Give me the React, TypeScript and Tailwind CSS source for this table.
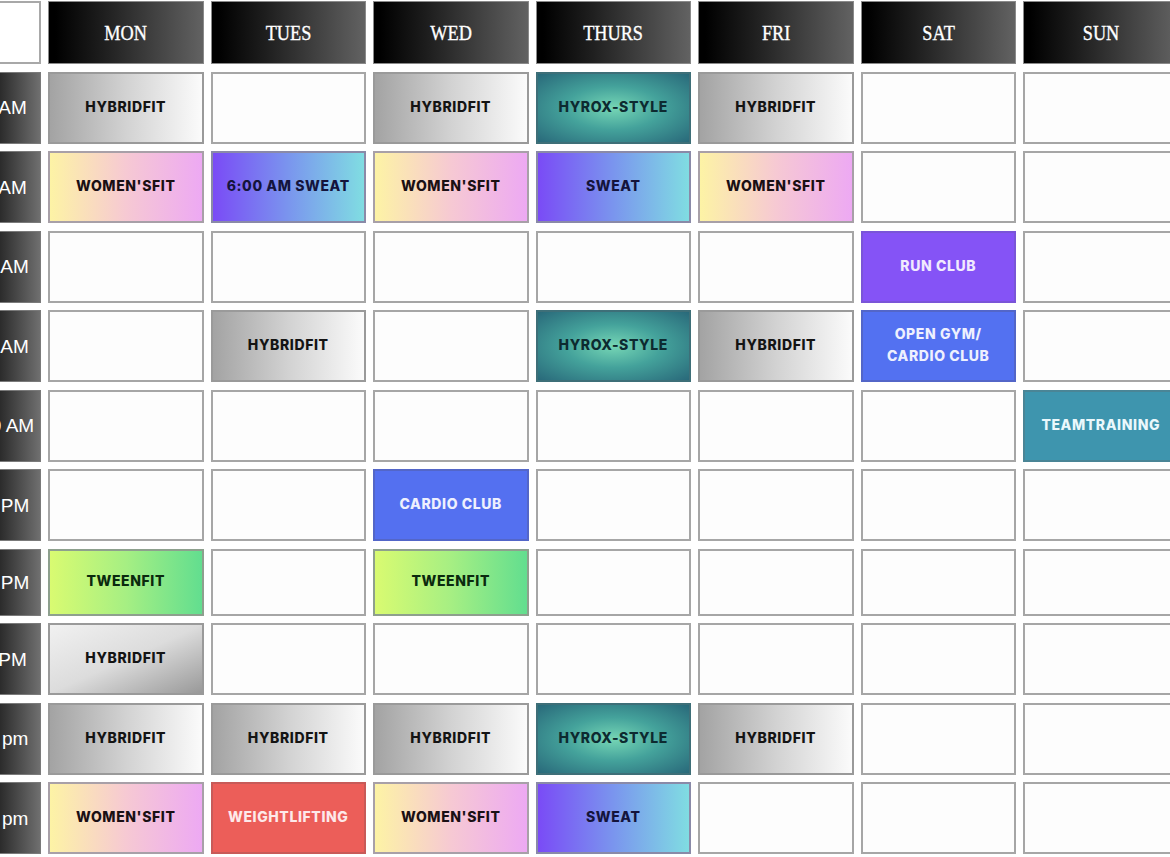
import React from "react";

type Kind =
  | "empty"
  | "hybrid"
  | "hybridRev"
  | "hyrox"
  | "women"
  | "sweat"
  | "run"
  | "open"
  | "team"
  | "cardio"
  | "tween"
  | "weight";

const styles: Record<Kind, string> = {
  empty: "bg-[#fdfdfd] border-[#a6a6a6]",
  hybrid: "bg-[linear-gradient(to_right,#a3a3a3,#d2d2d2_50%,#fbfbfb)] text-[#141414] border-[#9a9a9a]",
  hybridRev:
    "bg-[linear-gradient(to_bottom_right,#f1f1f1,#dcdcdc_50%,#999999)] text-[#141414] border-[#9a9a9a]",
  hyrox:
    "bg-[radial-gradient(ellipse_at_center,#76d6b5_0%,#44a29b_45%,#29697a_100%)] text-[#0d2a30] border-[#3e6f78]",
  women:
    "bg-[linear-gradient(to_right,#fdf3a5,#f6c9d3_50%,#eda9f3)] text-[#1a1014] border-[#a8a0a8]",
  sweat:
    "bg-[linear-gradient(to_right,#7a4bf6,#7a95ee_50%,#80dde2)] text-[#14143c] border-[#8a8aa8]",
  run: "bg-[#8553f6] text-[#f1eafe] border-[#7a55d8]",
  open: "bg-[#5371f1] text-[#eef0fe] border-[#5366c8]",
  team: "bg-[#3e95ae] text-[#eaf8fc] border-[#4a8596]",
  cardio: "bg-[#5470f0] text-[#eef0fe] border-[#5366c8]",
  tween:
    "bg-[linear-gradient(to_right,#d9fb71,#a6ef83_50%,#62de8f)] text-[#0b2a0e] border-[#8ea08e]",
  weight: "bg-[#ec5e59] text-[#fde9ea] border-[#c85a58]",
};

type C = [Kind, string?];

const E: C = ["empty"];
const HY: C = ["hybrid", "HYBRIDFIT"];
const HX: C = ["hyrox", "HYROX-STYLE"];
const WF: C = ["women", "WOMEN'SFIT"];

const rows: { time: string; cells: C[] }[] = [
  { time: "5:30AM", cells: [HY, E, HY, HX, HY, E, E] },
  { time: "6:00AM", cells: [WF, ["sweat", "6:00 AM SWEAT"], WF, ["sweat", "SWEAT"], WF, E, E] },
  { time: "8:00 AM", cells: [E, E, E, E, E, ["run", "RUN CLUB"], E] },
  { time: "9:00 AM", cells: [E, HY, E, HX, HY, ["open", "OPEN GYM/\nCARDIO CLUB"], E] },
  { time: "10:00 AM", cells: [E, E, E, E, E, E, ["team", "TEAMTRAINING"]] },
  { time: "1:00 PM", cells: [E, E, ["cardio", "CARDIO CLUB"], E, E, E, E] },
  { time: "4:30 PM", cells: [["tween", "TWEENFIT"], E, ["tween", "TWEENFIT"], E, E, E, E] },
  { time: "5:00PM", cells: [["hybridRev", "HYBRIDFIT"], E, E, E, E, E, E] },
  { time: "6:00 pm", cells: [HY, HY, HY, HX, HY, E, E] },
  { time: "7:00 pm", cells: [WF, ["weight", "WEIGHTLIFTING"], WF, ["sweat", "SWEAT"], E, E, E] },
];

const days = ["MON", "TUES", "WED", "THURS", "FRI", "SAT", "SUN"];

export default function App() {
  return (
    <div className="w-[1170px] h-[857px] overflow-hidden bg-white">
      <div className="-ml-[53px] mt-px grid grid-cols-[94px_repeat(7,155.5px)] grid-rows-[63px_repeat(6,72px)_67px_repeat(3,72px)] gap-x-[7px] gap-y-[7.5px]">
        <div className="border-2 border-[#a8a8a8] bg-white" />
        {days.map((d) => (
          <div
            key={d}
            className="flex items-center justify-center border border-[#8a8a8a] bg-[linear-gradient(to_right,#000000_4%,#1e1e1e_35%,#626262_100%)]"
          >
            <span className="scale-x-[0.83] text-[22px] leading-none text-white [-webkit-text-stroke:0.35px_white] [font-family:'Liberation_Serif',serif]">
              {d}
            </span>
          </div>
        ))}
        {rows.map((r, i) => (
          <React.Fragment key={i}>
            <div className="flex items-center justify-center overflow-visible border border-[#7a7a7a] bg-[linear-gradient(to_right,#000000,#2c2c2c_57%,#6f6f6f)]">
              <span className="whitespace-nowrap text-[19px] leading-none text-white [font-family:'Liberation_Sans',Arial,sans-serif]">
                {r.time}
              </span>
            </div>
            {r.cells.map(([k, label], j) => (
              <div
                key={j}
                className={`flex items-center justify-center whitespace-pre-line border-2 pb-[2px] text-center text-[14px] font-extrabold leading-[22px] tracking-[0.6px] [font-family:Inter,'Open_Sans',sans-serif] ${styles[k]}`}
              >
                {label ?? ""}
              </div>
            ))}
          </React.Fragment>
        ))}
      </div>
    </div>
  );
}
